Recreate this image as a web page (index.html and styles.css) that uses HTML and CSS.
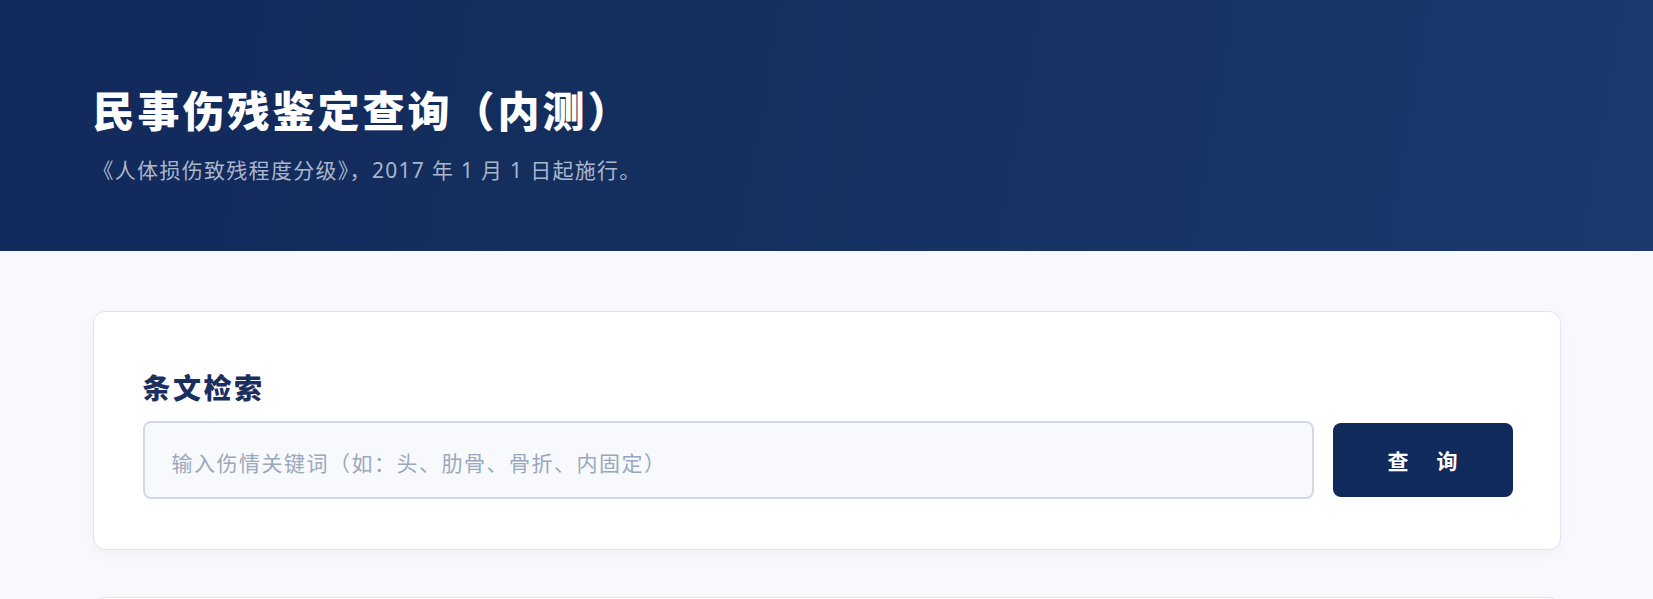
FILE: index.html
```html
<!DOCTYPE html>
<html lang="zh-CN">
<head>
<meta charset="utf-8">
<title>民事伤残鉴定查询（内测）</title>
<link rel="stylesheet" href="styles.css">
</head>
<body>
<header class="hero">
  <div class="wrap">
    <h1 class="hero-title">民事伤残鉴定查询（内测）</h1>
    <p class="hero-sub">《人体损伤致残程度分级》，2017 年 1 月 1 日起施行。</p>
  </div>
</header>
<main class="wrap main">
  <section class="card search-card">
    <h2 class="card-title">条文检索</h2>
    <div class="search-row">
      <input class="search-input" type="text" placeholder="输入伤情关键词（如：头、肋骨、骨折、内固定）">
      <button class="search-btn" type="button"><span>查</span><span>询</span></button>
    </div>
  </section>
  <section class="card result-card"></section>
</main>
</body>
</html>
```

FILE: styles.css
```css
* { box-sizing: border-box; }

html, body {
  margin: 0;
  padding: 0;
}

body {
  background: #f7f9fc;
  font-family: "Noto Sans", "Noto Sans CJK SC", sans-serif;
  color: #1b2f5e;
}

.wrap {
  width: 1468px;
  margin: 0 auto;
}

.hero {
  height: 251px;
  background: linear-gradient(100deg, #11295b 0%, #15305f 45%, #1a396d 100%);
  padding-top: 82px;
}

.hero-title {
  margin: 0;
  font-family: "Noto Sans CJK SC", sans-serif;
  font-size: 42px;
  line-height: 1.3;
  font-weight: 900;
  letter-spacing: 3px;
  color: #ffffff;
}

.hero-sub {
  margin: 18px 0 0;
  font-family: "Noto Sans", "Noto Sans CJK SC", sans-serif;
  font-size: 21px;
  line-height: 1.5;
  letter-spacing: 1.3px;
  color: #aab6cc;
}

.main {
  padding-top: 60px;
}

.card {
  background: #ffffff;
  border: 1px solid #dfe5ee;
  border-radius: 12px;
  box-shadow: 0 4px 14px rgba(20, 45, 95, 0.03);
}

.search-card {
  padding: 57px 47px 50px 49px;
}

.card-title {
  margin: 0 0 14px;
  font-family: "Noto Sans CJK SC", sans-serif;
  font-size: 28px;
  line-height: 1.35;
  font-weight: 900;
  letter-spacing: 2.5px;
  color: #1b2f5e;
}

.search-row {
  display: flex;
  align-items: center;
  gap: 19px;
}

.search-input {
  flex: 1;
  height: 78px;
  border: 2px solid #d1dae8;
  border-radius: 8px;
  background: #f7f9fd;
  padding: 4px 27px 0;
  font-family: "Noto Sans CJK SC", sans-serif;
  font-size: 21px;
  letter-spacing: 1.5px;
  color: #1b2f5e;
  outline: none;
}

.search-input::placeholder {
  color: #9ba8bb;
}

.search-btn {
  width: 180px;
  height: 74px;
  border: none;
  border-radius: 8px;
  background: #102a5b;
  color: #ffffff;
  font-family: "Noto Sans CJK SC", sans-serif;
  font-size: 21px;
  font-weight: 700;
  display: flex;
  align-items: center;
  justify-content: center;
  gap: 28px;
  cursor: pointer;
}

.result-card {
  margin-top: 47px;
  height: 300px;
}
```
